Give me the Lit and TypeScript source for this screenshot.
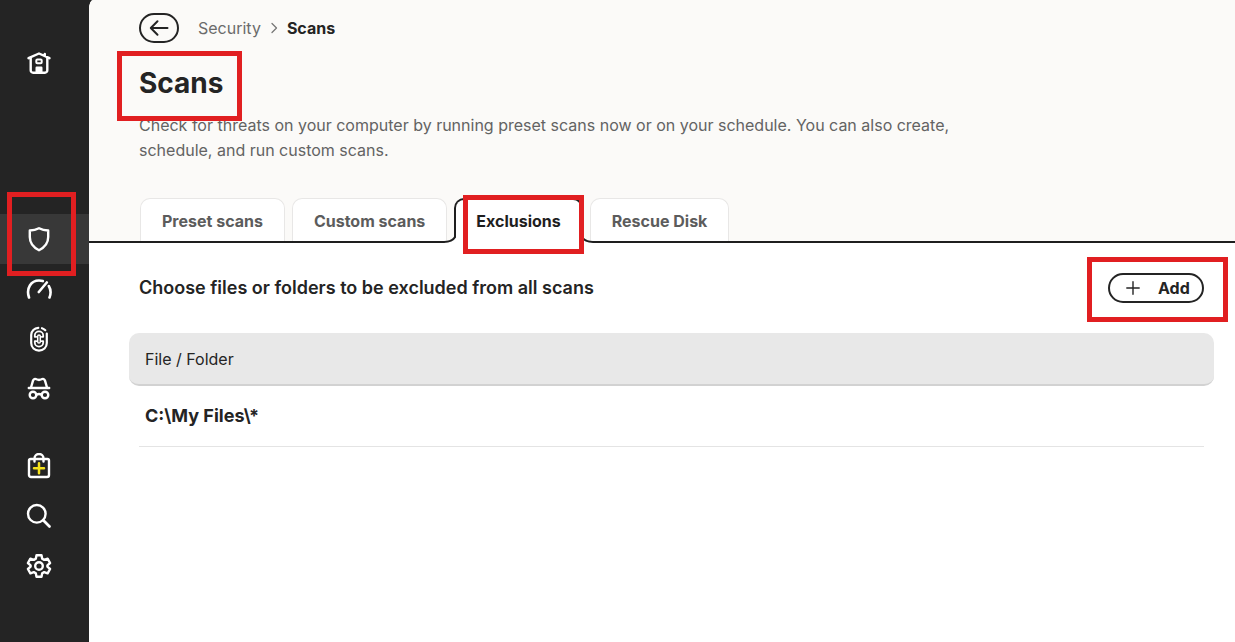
import { LitElement, html, css, svg } from "lit";
import { customElement, state } from "lit/decorators.js";

const icons = {
  home: svg`<path d="M2.500 8.200 13 3.500l10.500 4.700M18.800 6V4M4.700 8v12.300a2.400 2.400 0 0 0 2.400 2.400h11.800a2.400 2.400 0 0 0 2.400-2.400V8" /><rect x="10.300" y="9.500" width="5.400" height="3.800" rx="1" stroke-width="2"/><path d="M10.700 22v-4.200h4.600V22z" fill="currentColor" />`,
  shield: svg`<path d="M13 2.200c3 1.700 6.200 2.300 9.200 2.300v6.500c0 6.200-4 10.600-9.200 13.200-5.200-2.600-9.200-7-9.200-13.200V4.500C6.800 4.500 10 3.900 13 2.200z" />`,
  gauge: svg`<path d="M3 21.500C-.2 12 5.200 4.500 13 4.500c1.200 0 2.600.2 3.800.6M22.800 10c2 3.300 2.300 7.500.7 11.500M12.800 16l8-9.500" stroke-width="2.600"/>`,
  finger: svg`<path d="M12.300 1.800C8.500 2.200 5.200 5 5.200 9v8c0 4.500 3.500 7.600 7.800 7.600s7.800-3.100 7.800-7.600V7.500M16 2.200c1.300.4 2.400 1.100 3.300 2" stroke-width="2.200"/><path d="M8.800 10.800V9.500C8.800 7.200 10.700 5.400 13 5.400s4.200 1.800 4.200 4.100v1.300h-1.500M8.800 15.200v1.300c0 2.300 1.900 4.100 4.200 4.100s4.200-1.800 4.200-4.100v-1.300h-1.500M8.800 10.800h1.500M8.800 15.200h1.500" stroke-width="1.800"/><rect x="11.700" y="9" width="2.600" height="8" rx="1.300" stroke-width="1.500" />`,
  spy: svg`<path d="M5 11.500 7 4.700c.5-1.700 2-2.200 3.500-1.400 1.600.8 3.400.8 5 0 1.500-.8 3-.3 3.500 1.400l2 6.800M2.800 12h20.400M10.500 18.800c1.500-1 3.500-1 5 0" /><circle cx="7" cy="19" r="3.300" /><circle cx="19" cy="19" r="3.300" />`,
  bag: svg`<path d="M4.500 6h17A1.500 1.500 0 0 1 23 7.500V22a2 2 0 0 1-2 2H5a2 2 0 0 1-2-2V7.500A1.500 1.500 0 0 1 4.500 6zM8.500 8.500V5.500a4.500 4.500 0 0 1 9 0v3" /><path d="M13 10.200v10M8 15.200h10" stroke="#f5e21b" stroke-width="2.500" />`,
  search: svg`<circle cx="10.800" cy="10.800" r="8.800" /><path d="m17.300 17.300 6.200 6.200" stroke-width="2.700" />`,
  gear: svg`<path d="M10.500 2.200h5l.7 3.500 2 1.200 3.400-1.200 2.500 4.300-2.700 2.300v1.400l2.700 2.300-2.500 4.300-3.400-1.200-2 1.200-.7 3.500h-5l-.7-3.500-2-1.200-3.400 1.200L1.900 16l2.700-2.300v-1.400L1.900 10l2.500-4.300 3.400 1.200 2-1.200z" /><circle cx="13" cy="13" r="3.800" />`,
};

type IconName = keyof typeof icons;

const groups: { icon: IconName; label: string }[][] = [
  [{ icon: "home", label: "Home" }],
  [
    { icon: "shield", label: "Security" },
    { icon: "gauge", label: "Performance" },
    { icon: "finger", label: "Identity" },
    { icon: "spy", label: "Privacy" },
  ],
  [
    { icon: "bag", label: "Store" },
    { icon: "search", label: "Search" },
    { icon: "gear", label: "Settings" },
  ],
];

const marker = css`
  .marker {
    position: absolute;
    border: 5px solid #e11f21;
    pointer-events: none;
    z-index: 5;
  }
`;

@customElement("side-nav")
class SideNav extends LitElement {
  static styles = [
    marker,
    css`
      :host {
        display: block;
        background: #242424;
        color: #fff;
      }
      nav {
        padding-top: 38px;
      }
      ul {
        list-style: none;
        margin: 0 0 27px;
        padding: 0;
      }
      ul:first-child {
        margin-bottom: 126px;
      }
      a {
        position: relative;
        display: flex;
        height: 50px;
        align-items: center;
        padding-left: 26px;
        color: inherit;
      }
      .current {
        background: #383838;
      }
      svg {
        width: 26px;
        height: 26px;
        fill: none;
        stroke: currentColor;
        stroke-width: 2.4;
        stroke-linecap: round;
        stroke-linejoin: round;
      }
      .marker {
        inset: -22px 13px -12px 7px;
      }
    `,
  ];

  render() {
    return html`<nav aria-label="Main">
      ${groups.map(
        (group) => html`<ul>
          ${group.map(
            ({ icon, label }) => html`<li>
              <a href="#" aria-label=${label} class=${icon === "shield" ? "current" : ""}>
                <svg viewBox="0 0 26 26" aria-hidden="true">${icons[icon]}</svg>
                ${icon === "shield" ? html`<span class="marker"></span>` : ""}
              </a>
            </li>`
          )}
        </ul>`
      )}
    </nav>`;
  }
}

@customElement("app-root")
class AppRoot extends LitElement {
  @state() private active = "Exclusions";

  static styles = [
    marker,
    css`
      :host {
        display: grid;
        grid-template-columns: 89px 1fr;
        min-height: 100vh;
        background: #242424;
        color: #242424;
        font: 16px/24px Inter, "Noto Sans", sans-serif;
      }
      * {
        box-sizing: border-box;
      }
      h1,
      h2,
      p {
        margin: 0;
      }
      button {
        font: inherit;
        color: inherit;
        cursor: pointer;
      }
      main {
        background: #fff;
        border-top-left-radius: 4px 9px;
        overflow: hidden;
      }
      header {
        background: #fbfaf8;
        padding-top: 13px;
      }
      .intro {
        padding: 0 50px;
      }
      .crumbs {
        display: flex;
        align-items: center;
        height: 30px;
      }
      .crumbs a {
        color: #6b6b6b;
        text-decoration: none;
      }
      .crumbs strong {
        font-weight: 650;
      }
      .back {
        display: flex;
        align-items: center;
        justify-content: center;
        width: 40px;
        height: 30px;
        margin-right: 19px;
        padding: 0;
        border: 2px solid #242424;
        border-radius: 15px;
        background: none;
      }
      .line {
        flex: none;
        fill: none;
        stroke: currentColor;
        stroke-linecap: round;
        stroke-linejoin: round;
      }
      .chevron {
        margin: 0 8px;
        color: #777;
      }
      .title {
        position: relative;
        display: inline-block;
        margin-top: 22px;
      }
      h1 {
        font-size: 28px;
        line-height: 36px;
        font-weight: 700;
      }
      .title .marker {
        inset: -14px -19px -20px -22px;
      }
      .lead {
        max-width: 840px;
        margin-top: 12px;
        line-height: 25px;
        color: #636363;
      }
      .tabs {
        display: flex;
        gap: 7px;
        height: 45px;
        margin-top: 35px;
        padding-left: 51px;
        border-bottom: 2px solid #1e1e1e;
      }
      .tab {
        position: relative;
        height: 43px;
        padding: 2px 21px 0;
        border: 1px solid #e8e7e6;
        border-bottom: 0;
        border-radius: 10px 10px 0 0;
        background: #fff;
        color: #5c5c5c;
        font-weight: 650;
      }
      .tab.active {
        height: 45px;
        border: 2px solid #1e1e1e;
        border-bottom: 0;
        padding: 2px 20px 3px;
        color: #1e1e1e;
        z-index: 1;
      }
      .flare {
        position: absolute;
        bottom: 0;
        width: 12px;
        height: 14px;
      }
      .flare.left {
        left: -12px;
      }
      .flare.right {
        right: -12px;
        transform: scaleX(-1);
      }
      .tab .marker {
        inset: -5px -3px -11px 7px;
      }
      section {
        padding: 30px 31px 0 50px;
      }
      .bar {
        display: flex;
        align-items: center;
        justify-content: space-between;
      }
      h2 {
        font-size: 18px;
        line-height: 30px;
        font-weight: 600;
      }
      .add {
        position: relative;
        display: flex;
        align-items: center;
        width: 96px;
        height: 30px;
        padding: 0 0 0 16px;
        border: 2px solid #242424;
        border-radius: 15px;
        background: #fff;
        font-weight: 700;
      }
      .add .line {
        margin-right: 18px;
      }
      .add .marker {
        inset: -18px -26px -21px -23px;
      }
      .files {
        margin: 30px -10px 0;
      }
      table {
        width: 100%;
        border-collapse: separate;
        border-spacing: 0;
        text-align: left;
      }
      th {
        height: 53px;
        padding: 0 16px;
        border-bottom: 2px solid #d2d2d2;
        border-radius: 10px;
        background: #e8e8e8;
        font-weight: 400;
      }
      td {
        padding: 0 10px;
      }
      .file {
        padding: 18px 6px;
        border-bottom: 1px solid #e4e4e4;
        font-size: 18px;
        font-weight: 650;
      }
    `,
  ];

  private flare(side: string) {
    return html`<svg class="flare ${side}" viewBox="0 0 12 14" aria-hidden="true">
      <path d="M0 13C8 13 13 9 13 0V14H0z" fill="#fff" />
      <path d="M0 13C8 13 13 9 13 0" fill="none" stroke="#1e1e1e" stroke-width="2" />
    </svg>`;
  }

  private tab(name: string) {
    const on = name === this.active;
    return html`<button
      class="tab ${on ? "active" : ""}"
      role="tab"
      aria-selected=${on ? "true" : "false"}
      @click=${() => (this.active = name)}
    >
      ${name}${on
        ? html`${this.flare("left")}${this.flare("right")}<span class="marker"></span>`
        : ""}
    </button>`;
  }

  render() {
    return html`
      <side-nav></side-nav>
      <main>
        <header>
          <div class="intro">
            <nav class="crumbs" aria-label="Breadcrumb">
              <button class="back" aria-label="Back">
                <svg class="line" width="20" height="18" viewBox="0 0 20 18" stroke-width="2">
                  <path d="M18.500 9H2M8.500 2.300 1.800 9l6.700 6.700" />
                </svg>
              </button>
              <a href="#">Security</a>
              <svg class="line chevron" width="10" height="12" viewBox="0 0 10 12" stroke-width="1.300">
                <path d="m3 1.500 4.500 4.500L3 10.500" />
              </svg>
              <strong>Scans</strong>
            </nav>
            <div class="title"><h1>Scans</h1><span class="marker"></span></div>
            <p class="lead">
              Check for threats on your computer by running preset scans now or on your schedule. You
              can also create, schedule, and run custom scans.
            </p>
          </div>
          <div class="tabs" role="tablist">
            ${["Preset scans", "Custom scans", "Exclusions", "Rescue Disk"].map((t) => this.tab(t))}
          </div>
        </header>
        <section>
          <div class="bar">
            <h2>Choose files or folders to be excluded from all scans</h2>
            <button class="add">
              <svg class="line" width="14" height="14" viewBox="0 0 14 14" stroke-width="1.400">
                <path d="M7 .8v12.400M.8 7h12.400" />
              </svg>
              <span>Add</span><span class="marker"></span>
            </button>
          </div>
          <div class="files">
            <table>
              <thead>
                <tr><th scope="col">File / Folder</th></tr>
              </thead>
              <tbody>
                <tr><td><div class="file">C:\\My Files\\*</div></td></tr>
              </tbody>
            </table>
          </div>
        </section>
      </main>
    `;
  }
}
